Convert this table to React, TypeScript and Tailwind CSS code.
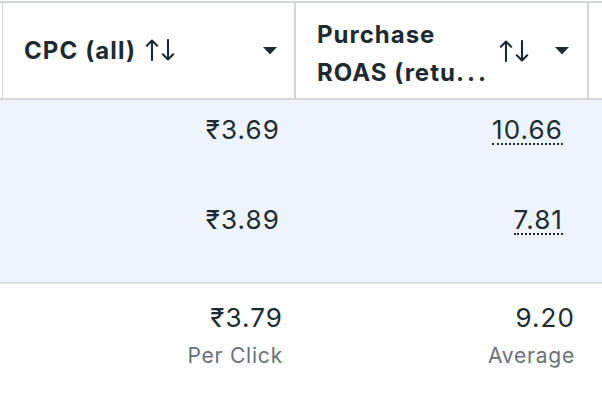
import React from "react";

const SortIcon = () => (
  <svg width="30" height="22" viewBox="0 0 30 22" fill="none" stroke="#1c2b33" strokeWidth="2.1" strokeLinecap="round" strokeLinejoin="round">
    <path d="M7 21V1.5M1.8 6.7L7 1.5l5.2 5.2" />
    <path d="M23 1v19.5M17.8 15.3L23 20.5l5.2-5.2" />
  </svg>
);

const Caret = () => (
  <svg width="14" height="8" viewBox="0 0 14 8">
    <path d="M0 0h14L7 7.5z" fill="#1c2b33" />
  </svg>
);

export default function App() {
  return (
    <div className="w-[602px] h-[402px] bg-white overflow-hidden text-[#1c2b33]" style={{ fontFamily: "Inter, 'Noto Sans', sans-serif" }}>
      <div className="h-px bg-white" />
      <div className="h-[2px] bg-[#d3d6db]" />
      <div className="flex">
        <div className="w-[2px]" />
        <div className="w-px h-[95px] bg-[#d3d6db]" />
        <div className="flex w-[291px] items-center pl-[21px] pr-[17px] h-[95px]">
          <span className="text-[24px] font-bold tracking-[1.1px]">CPC (all)</span>
          <span className="ml-[9px] mt-[-2px]"><SortIcon /></span>
          <span className="ml-auto"><Caret /></span>
        </div>
        <div className="w-[2px] h-[95px] bg-[#d3d6db]" />
        <div className="flex w-[291px] items-center pl-[21px] pr-[18px] h-[95px]">
          <div className="text-[24px] font-bold leading-[38px] tracking-[1px] mt-[6px]">
            <div>Purchase</div>
            <div>
              ROAS (retu<span className="tracking-[3px]">...</span>
            </div>
          </div>
          <span className="ml-auto"><SortIcon /></span>
          <span className="ml-[26px]"><Caret /></span>
        </div>
        <div className="w-[2px] h-[95px] bg-[#d3d6db]" />
      </div>
      <div className="h-[2px] bg-[#d3d6db]" />
      <div className="bg-[#edf4fe] h-[184px] border-b-2 border-[#dfe3e8]">
        {[
          ["₹3.69", "10.66"],
          ["₹3.89", "7.81"],
        ].map(([a, b], i) => (
          <div key={i} className="flex h-[90px] pt-[14px] text-[26px] leading-[32px] tracking-[1.1px]">
            <div className="w-[295px] pr-[15px] text-right">{a}</div>
            <div className="w-[292px] pr-[24px] text-right">
              <span className="border-b-2 border-dotted border-[#1c2b33] leading-[26px] inline-block">{b}</span>
            </div>
          </div>
        ))}
      </div>
      <div className="flex pt-[18px]">
        <div className="w-[295px] pr-[12px] text-right">
          <div className="text-[26px] leading-[32px] tracking-[1.1px]">₹3.79</div>
          <div className="text-[21px] leading-[28px] tracking-[0.8px] text-[#67727a] mt-[8px]">Per Click</div>
        </div>
        <div className="w-[292px] pr-[12px] text-right">
          <div className="text-[26px] leading-[32px] tracking-[1.1px]">9.20</div>
          <div className="text-[21px] leading-[28px] tracking-[0.8px] text-[#67727a] mt-[8px]">Average</div>
        </div>
      </div>
    </div>
  );
}
